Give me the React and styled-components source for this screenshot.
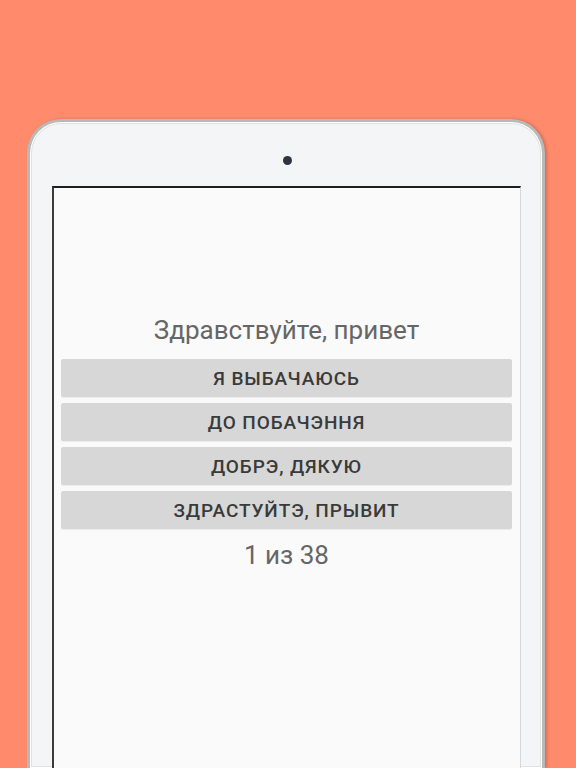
import styled, { createGlobalStyle } from 'styled-components'

const Global = createGlobalStyle`
  html, body {
    margin: 0;
    padding: 0;
    height: 100%;
    overflow: hidden;
    background: #ff8a6c;
  }
  body {
    font-family: Roboto, "Noto Sans", "Liberation Sans", sans-serif;
  }
`

const answers = ['Я ВЫБАЧАЮСЬ', 'ДО ПОБАЧЭННЯ', 'ДОБРЭ, ДЯКУЮ', 'ЗДРАСТУЙТЭ, ПРЫВИТ']

export default function App() {
  return (
    <>
      <Global />
      <Page>
        <Tablet>
          <Camera />
          <Screen>
            <Question>Здравствуйте, привет</Question>
            <Answers>
              {answers.map((a) => (
                <Answer key={a}>{a}</Answer>
              ))}
            </Answers>
            <Counter>1 из 38</Counter>
          </Screen>
        </Tablet>
      </Page>
    </>
  )
}

const Page = styled.div`
  height: 768px;
  padding: 119px 0 0 27px;
  box-sizing: border-box;
`

const Tablet = styled.div`
  width: 518px;
  height: 649px;
  box-sizing: border-box;
  background: #f4f5f7;
  border-radius: 34px 34px 0 0;
  border: 3px solid #b9b9b7;
  border-bottom: none;
  box-shadow: inset 0 0 0 1px #ffffff, inset 0 0 0 2px #e2e2e2, 2px 0 3px rgba(90, 40, 30, 0.25);
  padding: 64px 21px 0 22px;
  display: flex;
  flex-direction: column;
  position: relative;
`

const Camera = styled.div`
  position: absolute;
  top: 34px;
  left: 253px;
  width: 9px;
  height: 9px;
  border-radius: 50%;
  background: #2f3540;
`

const Screen = styled.div`
  flex: 1;
  background: #fafafa;
  border-top: 2px solid #1e1e1e;
  border-left: 2px solid #3a3a3a;
  border-right: 1px solid #d8d8d8;
  padding: 126px 8px 0 7px;
  display: flex;
  flex-direction: column;
  align-items: stretch;
`

const Question = styled.div`
  text-align: center;
  font-size: 26px;
  line-height: 32px;
  color: #666666;
`

const Answers = styled.div`
  margin-top: 13px;
  display: flex;
  flex-direction: column;
  gap: 6px;
`

const Answer = styled.div`
  height: 38px;
  background: #d7d7d7;
  border-radius: 2px;
  box-shadow: 0 1px 1px rgba(0, 0, 0, 0.06);
  display: flex;
  align-items: center;
  justify-content: center;
  font-size: 19px;
  font-weight: 500;
  letter-spacing: 0.9px;
  color: #3a3a3a;
`

const Counter = styled.div`
  margin-top: 10px;
  text-align: center;
  font-size: 26px;
  line-height: 32px;
  color: #666666;
`
